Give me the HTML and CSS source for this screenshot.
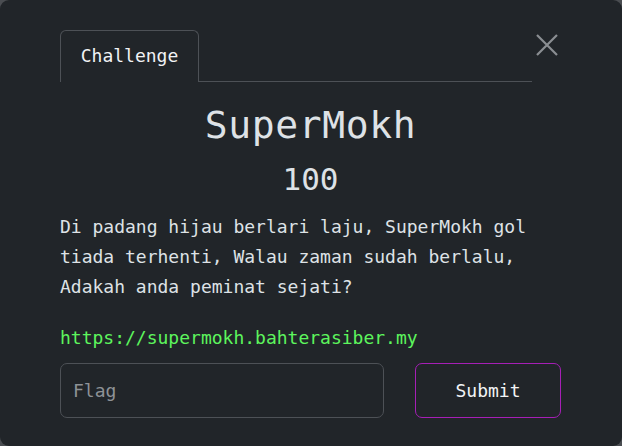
FILE: index.html
```html
<!DOCTYPE html>
<html lang="ms">
<head>
<meta charset="utf-8">
<title>Challenge</title>
<link rel="stylesheet" href="styles.css">
</head>
<body>
<div class="modal">
  <div class="modal-header">
    <div class="tabs">
      <div class="tab">Challenge</div>
    </div>
    <button class="close" aria-label="Close">
      <svg width="22" height="22" viewBox="0 0 22 22"><path d="M1 1 L21 21 M21 1 L1 21" stroke="#8b8e92" stroke-width="2.2" fill="none"/></svg>
    </button>
  </div>
  <h1 class="title">SuperMokh</h1>
  <div class="points">100</div>
  <p class="desc">Di padang hijau berlari laju, SuperMokh gol tiada terhenti, Walau zaman sudah berlalu, Adakah anda peminat sejati?</p>
  <p class="link">https://supermokh.bahterasiber.my</p>
  <form class="flag-form">
    <input class="flag-input" type="text" placeholder="Flag">
    <button class="submit" type="button">Submit</button>
  </form>
</div>
</body>
</html>
```
FILE: styles.css
```css
html, body {
  margin: 0;
  padding: 0;
  background: #4a4d51;
}
body {
  font-family: "DejaVu Sans Mono", "Liberation Mono", monospace;
  color: #dee2e6;
}
.modal {
  box-sizing: border-box;
  width: 622px;
  height: 446px;
  background: #212529;
  border-radius: 9px;
  padding: 30px 61px 0 60px;
  display: flex;
  flex-direction: column;
}
.modal-header {
  display: flex;
  align-items: flex-start;
}
.tabs {
  flex: 1;
  border-bottom: 1px solid #4d5156;
  display: flex;
}
.tab {
  box-sizing: border-box;
  width: 139px;
  height: 52px;
  margin-bottom: -1px;
  border: 1px solid #4d5156;
  border-bottom: none;
  border-radius: 6px 6px 0 0;
  background: #212529;
  color: #f1f3f5;
  font-size: 18px;
  line-height: 50px;
  text-align: center;
}
.close {
  width: 29px;
  height: 30px;
  padding: 0;
  margin: 4px 0 0 0;
  border: none;
  background: transparent;
  display: flex;
  justify-content: center;
  align-items: flex-start;
}
.close svg {
  display: block;
}
.title {
  margin: 20px 0 0 0;
  font-size: 38px;
  font-weight: normal;
  line-height: 46px;
  text-align: center;
  color: #dee2e6;
  letter-spacing: 0.6px;
}
.points {
  margin-top: 13px;
  font-size: 31px;
  line-height: 37px;
  text-align: center;
  color: #dee2e6;
}
.desc {
  margin: 14px 0 0 0;
  font-size: 18px;
  line-height: 30px;
  color: #dee2e6;
}
.link {
  margin: 21px 0 0 0;
  font-size: 18px;
  line-height: 30px;
  color: #5df55d;
}
.flag-form {
  margin-top: 10px;
  display: flex;
  gap: 31px;
}
.flag-input {
  box-sizing: border-box;
  width: 324px;
  height: 55px;
  padding: 0 12px;
  border: 1px solid #4d5156;
  border-radius: 7px;
  background: #212529;
  color: #dee2e6;
  font-family: inherit;
  font-size: 18px;
  outline: none;
}
.flag-input::placeholder {
  color: #8e9296;
}
.submit {
  box-sizing: border-box;
  width: 146px;
  height: 55px;
  border: 1px solid #a61fb6;
  border-radius: 7px;
  background: #212529;
  color: #f1f3f5;
  font-family: inherit;
  font-size: 18px;
}
```
